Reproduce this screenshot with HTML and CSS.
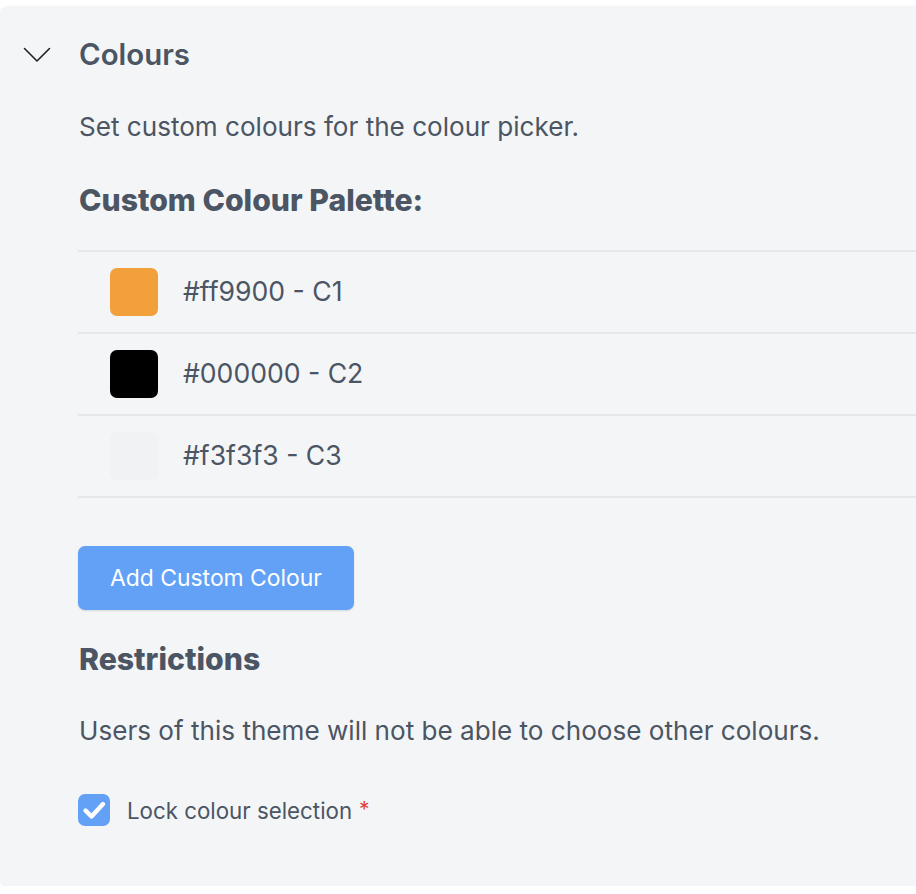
FILE: index.html
```html
<!DOCTYPE html>
<html lang="en">
<head>
    <meta charset="UTF-8">
    <meta name="viewport" content="width=device-width, initial-scale=1.0">
    <title>Theme Colours</title>
    <link rel="stylesheet" href="styles.css">
</head>
<body>
    <div class="panel">
        <div class="panel-header">
            <span class="chevron">
                <svg width="28" height="16" viewBox="0 0 28 16">
                    <path d="M1.5 1.5 L14 14 L26.5 1.5" fill="none" stroke="#1f2328" stroke-width="1.6" stroke-linecap="round" stroke-linejoin="round"/>
                </svg>
            </span>
            <h2>Colours</h2>
        </div>
        <div class="panel-body">
            <p class="desc">Set custom colours for the colour picker.</p>
            <h3 class="palette-title">Custom Colour Palette:</h3>
            <ul class="colour-list">
                <li class="colour-row">
                    <span class="swatch swatch-orange"></span>
                    <span class="colour-name">#ff9900 - C1</span>
                </li>
                <li class="colour-row">
                    <span class="swatch swatch-black"></span>
                    <span class="colour-name">#000000 - C2</span>
                </li>
                <li class="colour-row">
                    <span class="swatch swatch-grey"></span>
                    <span class="colour-name">#f3f3f3 - C3</span>
                </li>
            </ul>
            <button type="button" class="add-btn">Add Custom Colour</button>
            <h3 class="section-title">Restrictions</h3>
            <p class="desc users">Users of this theme will not be able to choose other colours.</p>
            <label class="check-row">
                <span class="checkbox">
                    <svg width="32" height="32" viewBox="0 0 32 32">
                        <path d="M7.5 16.5 L13.5 22.5 L25 10" fill="none" stroke="#fff" stroke-width="4.4" stroke-linecap="round" stroke-linejoin="round"/>
                    </svg>
                </span>
                <span class="check-label">Lock colour selection</span>
                <span class="required">*</span>
            </label>
        </div>
    </div>
</body>
</html>
```

FILE: styles.css
```css
body {
    margin: 0;
    background-color: #fff;
    font-family: "Inter", "Noto Sans", Arial, sans-serif;
    color: #4b5563;
}

.panel {
    margin-top: 6px;
    height: 880px;
    box-sizing: border-box;
    background-color: #f4f5f7;
    border-radius: 8px 0 0 8px;
    box-shadow: 0 1px 3px rgba(0, 0, 0, 0.08);
    padding-top: 31px;
}

.panel-header {
    display: flex;
    align-items: center;
}

.chevron {
    display: flex;
    width: 79px;
    padding-left: 23px;
    box-sizing: border-box;
}

.panel-header h2 {
    margin: 0;
    font-size: 29.4px;
    line-height: 36px;
    font-weight: 600;
}

.panel-body {
    padding-left: 78px;
}

.desc {
    margin: 38px 0 0 1px;
    font-size: 26.1px;
    line-height: 32px;
}

.palette-title,
.section-title {
    margin: 0 0 0 1px;
    font-size: 30.2px;
    line-height: 36px;
    font-weight: 800;
}

.palette-title {
    margin-top: 39px;
}

.colour-list {
    list-style: none;
    margin: 32px 0 0;
    padding: 0;
    border-top: 2px solid #e6e7ea;
}

.colour-row {
    display: flex;
    align-items: center;
    height: 80px;
    padding-left: 32px;
    border-bottom: 2px solid #e6e7ea;
}

.swatch {
    width: 48px;
    height: 48px;
    border-radius: 7px;
    margin-right: 25px;
}

.swatch-orange {
    background-color: #f2a03b;
}

.swatch-black {
    background-color: #000;
}

.swatch-grey {
    background-color: #f1f2f3;
}

.colour-name {
    font-size: 26.6px;
    padding-bottom: 2px;
}

.add-btn {
    display: block;
    margin-top: 48px;
    width: 276px;
    height: 64px;
    border: none;
    border-radius: 7px;
    background-color: #63a1f7;
    color: #fff;
    font-family: inherit;
    font-size: 22.9px;
    box-shadow: 0 1px 2px rgba(0, 0, 0, 0.12);
    cursor: pointer;
}

.section-title {
    margin-top: 31px;
}

.users {
    margin-top: 38px;
}

.check-row {
    display: flex;
    align-items: center;
    margin-top: 47px;
}

.checkbox {
    display: flex;
    width: 32px;
    height: 32px;
    border-radius: 7px;
    background-color: #63a1f7;
    margin-right: 17px;
}

.check-label {
    font-size: 22.3px;
}

.required {
    color: #e0413a;
    font-size: 21px;
    line-height: 24px;
    margin-left: 7px;
    margin-bottom: 1px;
}
```
